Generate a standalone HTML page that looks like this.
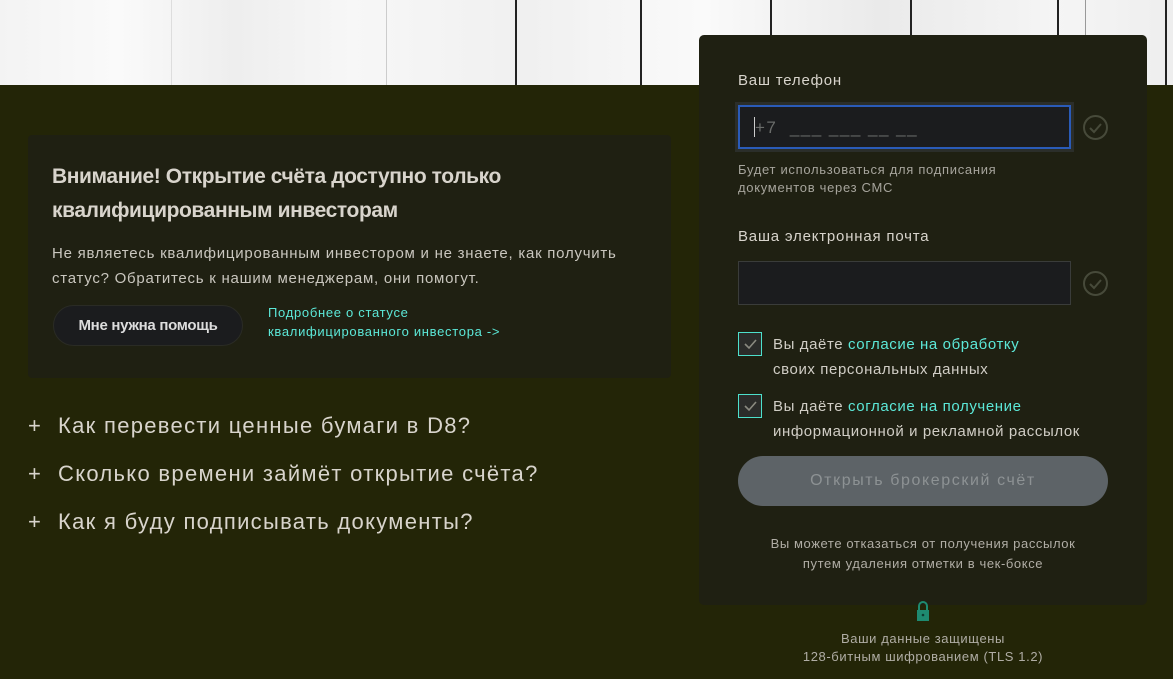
<!DOCTYPE html>
<html><head><meta charset="utf-8"><style>
*{margin:0;padding:0;box-sizing:border-box}
body{width:1173px;height:679px;overflow:hidden;background:#232507;font-family:"Liberation Sans",sans-serif;position:relative}
.photo{position:absolute;left:0;top:0;width:1173px;height:85px;background:linear-gradient(90deg,#f3f3f3,#fafafa 10%,#eee 20%,#f7f7f7 30%,#f0f0f0 45%,#fafafa 60%,#eaeaea 75%,#f5f5f5 90%,#eee)}
.ln{position:absolute;top:0;height:85px;width:2px;background:#222}
.card{position:absolute;left:28px;top:135px;width:643px;height:243px;background:#1f2012;border-radius:4px}
.h{position:absolute;left:52px;top:160px;font-size:21px;font-weight:bold;color:#d8d4cc;line-height:34px;letter-spacing:-.4px}
.p{position:absolute;left:52px;top:241px;font-size:15px;color:#c9c6be;line-height:25px;letter-spacing:.75px}
.btn{position:absolute;left:53px;top:305px;width:190px;height:41px;border-radius:21px;background:#1b1c1e;border:1px solid #2a2b25;color:#ddd;font-weight:bold;font-size:15px;text-align:center;line-height:39px;letter-spacing:-.3px}
.lnk{position:absolute;left:268px;top:303px;font-size:13px;color:#5ce8d8;line-height:19px;letter-spacing:.7px}
.q{position:absolute;left:28px;font-size:22px;color:#d8d4cc;letter-spacing:1.3px}
.q b{font-weight:normal;display:inline-block;width:30px;letter-spacing:0}
.panel{position:absolute;left:699px;top:35px;width:448px;height:570px;background:#1f2012;border-radius:5px}
.lbl{position:absolute;left:738px;font-size:15px;color:#d8d4cc;letter-spacing:.8px}
.inp{position:absolute;left:738px;width:333px;height:44px;background:#1b1c1e;border:1px solid #3a3c3a}
.chk{position:absolute;left:1083px;width:25px;height:25px}
.small{position:absolute;font-size:13px;color:#a6a49c;line-height:18px;letter-spacing:.7px}
.cb{position:absolute;left:738px;width:24px;height:24px;border:1px solid #4de0cc;background:#2b2c2a}
.ct{position:absolute;left:773px;font-size:15px;color:#d0cdc5;line-height:25px;letter-spacing:.6px}
.ct span{color:#5ce8d8}
.sub{position:absolute;left:738px;top:456px;width:370px;height:50px;border-radius:25px;background:#5d6367;color:#8d9294;font-size:16px;text-align:center;line-height:50px;letter-spacing:1.6px}
</style></head><body>
<div class="photo">
<div class="ln" style="left:171px;width:1px;background:#ddd"></div>
<div class="ln" style="left:386px;width:1px;background:#ccc"></div>
<div class="ln" style="left:515px"></div>
<div class="ln" style="left:640px"></div>
<div class="ln" style="left:770px"></div>
<div class="ln" style="left:910px"></div>
<div class="ln" style="left:1057px"></div>
<div class="ln" style="left:1085px;width:1px;background:#999"></div>
<div class="ln" style="left:1165px"></div>
</div>
<div class="card"></div>
<div class="h">Внимание! Открытие счёта доступно только<br>квалифицированным инвесторам</div>
<div class="p">Не являетесь квалифицированным инвестором и не знаете, как получить<br>статус? Обратитесь к нашим менеджерам, они помогут.</div>
<div class="btn">Мне нужна помощь</div>
<div class="lnk">Подробнее о статусе<br>квалифицированного инвестора -&gt;</div>
<div class="q" style="top:413px"><b>+</b>Как перевести ценные бумаги в D8?</div>
<div class="q" style="top:461px"><b>+</b>Сколько времени займёт открытие счёта?</div>
<div class="q" style="top:509px"><b>+</b>Как я буду подписывать документы?</div>

<div class="panel"></div>
<div class="lbl" style="top:72px">Ваш телефон</div>
<div class="inp" style="top:105px;border:2px solid #2a5bb8;box-shadow:0 0 0 3px #2b2e2a"></div>
<div style="position:absolute;left:754px;top:117px;font-size:17px;color:#6a6c6a;letter-spacing:1.5px;white-space:pre"><span style="display:inline-block;width:1px;height:20px;background:#ccc;vertical-align:-4px"></span>+7  ___ ___ __ __</div>
<svg class="chk" style="top:115px" viewBox="0 0 25 25"><circle cx="12.5" cy="12.5" r="11.5" fill="none" stroke="#474a3a" stroke-width="2"/><path d="M7 13l4 4 7-8" fill="none" stroke="#474a3a" stroke-width="2"/></svg>
<div class="small" style="left:738px;top:161px">Будет использоваться для подписания<br>документов через СМС</div>
<div class="lbl" style="top:228px">Ваша электронная почта</div>
<div class="inp" style="top:261px"></div>
<svg class="chk" style="top:271px" viewBox="0 0 25 25"><circle cx="12.5" cy="12.5" r="11.5" fill="none" stroke="#474a3a" stroke-width="2"/><path d="M7 13l4 4 7-8" fill="none" stroke="#474a3a" stroke-width="2"/></svg>
<div class="cb" style="top:332px"><svg width="22" height="22" viewBox="0 0 22 22"><path d="M6 11l4 4 7-8" fill="none" stroke="#8a8a80" stroke-width="1.6"/></svg></div>
<div class="ct" style="top:332px">Вы даёте <span>согласие на обработку</span><br>своих персональных данных</div>
<div class="cb" style="top:394px"><svg width="22" height="22" viewBox="0 0 22 22"><path d="M6 11l4 4 7-8" fill="none" stroke="#8a8a80" stroke-width="1.6"/></svg></div>
<div class="ct" style="top:394px">Вы даёте <span>согласие на получение</span><br>информационной и рекламной рассылок</div>
<div class="sub">Открыть брокерский счёт</div>
<div class="small" style="left:699px;width:448px;text-align:center;top:534px;color:#b0ada5;line-height:20px;letter-spacing:.6px">Вы можете отказаться от получения рассылок<br>путем удаления отметки в чек-боксе</div>
<svg style="position:absolute;left:916px;top:600px" width="14" height="22" viewBox="0 0 14 22"><path d="M3 10V6a4 4 0 0 1 8 0v4" fill="none" stroke="#1e8a70" stroke-width="2"/><rect x="1" y="10" width="12" height="11" fill="#1e8a70"/><circle cx="7" cy="15" r="1.3" fill="#0e3a30"/></svg>
<div class="small" style="left:699px;width:448px;text-align:center;top:630px;color:#b0ada5;letter-spacing:.6px">Ваши данные защищены<br>128-битным шифрованием (TLS 1.2)</div>
</body></html>
